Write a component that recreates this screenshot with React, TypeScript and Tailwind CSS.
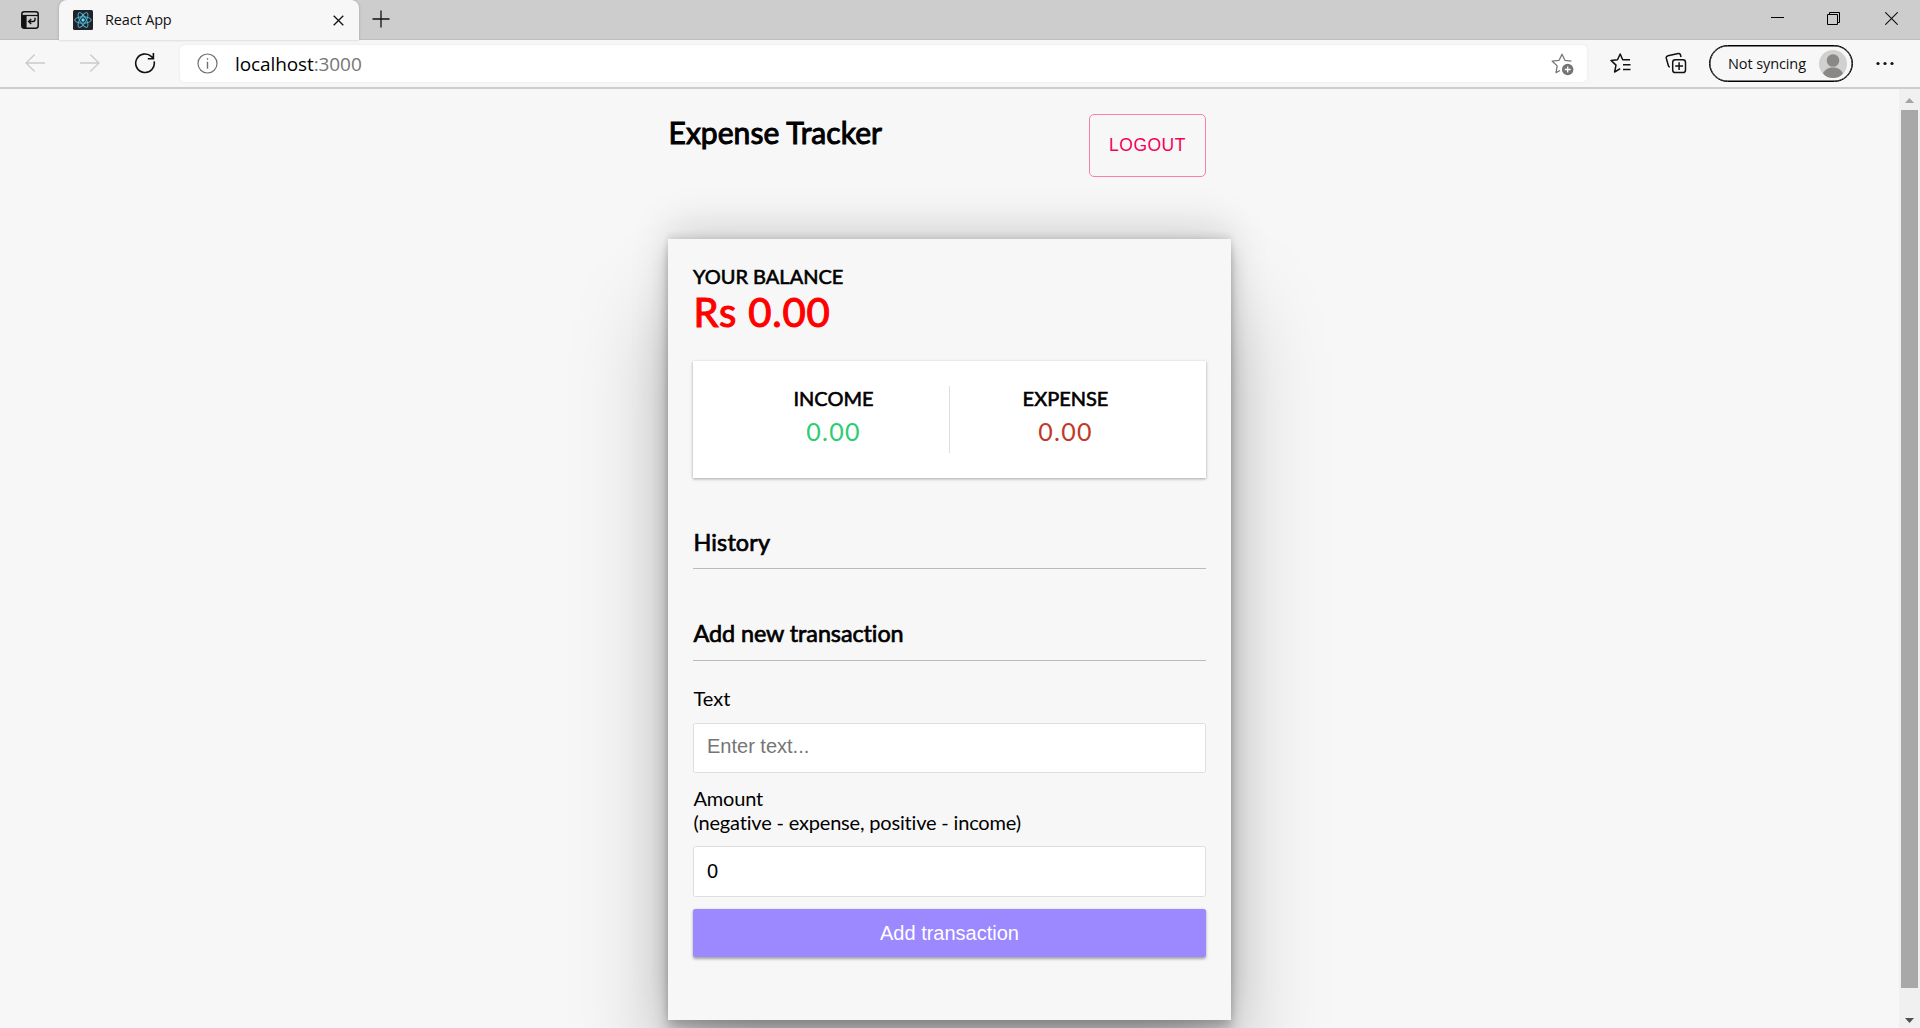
import React from "react";

const ui = "font-['Open_Sans','Noto_Sans',sans-serif]";

function ReactLogo() {
  return (
    <svg width="20" height="20" viewBox="0 0 20 20" fill="none">
      <rect width="20" height="20" rx="1.5" fill="#20232a" />
      <g stroke="#53c1de" strokeWidth="0.9">
        <ellipse cx="10" cy="10" rx="8.3" ry="3.2" />
        <ellipse cx="10" cy="10" rx="8.3" ry="3.2" transform="rotate(60 10 10)" />
        <ellipse cx="10" cy="10" rx="8.3" ry="3.2" transform="rotate(120 10 10)" />
      </g>
      <circle cx="10" cy="10" r="1.7" fill="#61dafb" />
    </svg>
  );
}

function TabStrip() {
  return (
    <div className="flex h-10 shrink-0 bg-[#cdcdcd] shadow-[inset_0_-1px_0_#bdbdbd]">
      <div className="flex w-[59px] shrink-0 pt-[11px] pl-[21px]">
        <svg width="18" height="18" viewBox="0 0 18 18" fill="none" stroke="#111">
          <rect x="0.8" y="0.8" width="16.4" height="16.4" rx="2.4" strokeWidth="1.5" />
          <path d="M1 4.500h16" strokeWidth="1.2" />
          <path d="M1 4h4.600v13H2.500L1 15.500z" fill="#111" stroke="none" />
          <path d="M14 6.700v1.800c0 1.300-.8 2-2 2H7.800M10.200 8l-2.600 2.500 2.600 2.500" strokeWidth="1.4" />
        </svg>
      </div>
      <div className="relative flex h-10 w-[300px] shrink-0 rounded-t-lg bg-[#f7f7f7] pt-2.5 pl-3.5 shadow-[0_0_3px_rgba(0,0,0,0.22)]">
        <ReactLogo />
        <span className={`${ui} ml-3 text-[14.5px] leading-5 tracking-[-0.15px] text-[#111]`}>React App</span>
        <svg className="mt-[5px] mr-[15px] ml-auto" width="11" height="11" viewBox="0 0 11 11" stroke="#111" strokeWidth="1.3">
          <path d="M.7.7l9.6 9.6M10.300.7L.7 10.300" />
        </svg>
      </div>
      <svg className="mt-2.5 ml-[13px]" width="18" height="18" viewBox="0 0 18 18" stroke="#111" strokeWidth="1.3">
        <path d="M9 .5v17M.5 9h17" />
      </svg>
      <div className="mr-[22px] ml-auto flex pt-3">
        <svg width="13" height="13" viewBox="0 0 13 13" stroke="#000" strokeWidth="1">
          <path d="M0 5.500h13" />
        </svg>
        <svg className="ml-[43px]" width="13" height="13" viewBox="0 0 13 13" fill="none" stroke="#000" strokeWidth="1">
          <path d="M.5 2.500h10v10h-10zM2.500 2.500v-2h10v10h-2" />
        </svg>
        <svg className="ml-[45px]" width="13" height="13" viewBox="0 0 13 13" stroke="#111" strokeWidth="1.1">
          <path d="M.3.3l12.400 12.400M12.700.3L.3 12.700" />
        </svg>
      </div>
    </div>
  );
}

const STAR = "M20.400 8.100l-6.500-.8L11 1.200 8.100 7.300 1.200 8.200l5 4.700-1.200 6.700 4-2.100";

function Toolbar() {
  return (
    <div className="flex h-[49px] shrink-0 border-b-2 border-[#cdcdcd] bg-[#f7f7f7]">
      <svg className="mt-3.5 ml-[25px]" width="20" height="18" viewBox="0 0 20 18" fill="none" stroke="#cacaca" strokeWidth="1.3">
        <path d="M9.700.5L1 9l8.700 8.500M1 9h19" />
      </svg>
      <svg className="mt-3.5 ml-[35px]" width="20" height="18" viewBox="0 0 20 18" fill="none" stroke="#cacaca" strokeWidth="1.3">
        <path d="M10.300.5L19 9l-8.700 8.500M19 9H0" />
      </svg>
      <svg className="mt-3 ml-[34px]" width="22" height="22" viewBox="0 0 22 22" fill="none" stroke="#111" strokeWidth="1.6">
        <path d="M20.100 9.300A9.300 9.300 0 1 1 17.500 4.600L19 6M19.400 1v5.700h-5.600" />
      </svg>
      <div className="mt-[5px] ml-[24px] flex h-[37px] w-[1407px] rounded-[5px] bg-white pl-[17px] shadow-[0_0_3px_rgba(0,0,0,0.07)]">
        <svg className="mt-2" width="21" height="21" viewBox="0 0 21 21" fill="none" stroke="#707070" strokeWidth="1.200">
          <circle cx="10.500" cy="10.500" r="9.500" />
          <path d="M10.500 8.700v7" strokeWidth="1.400" />
          <circle cx="10.500" cy="5.900" r=".5" fill="#707070" strokeWidth=".8" />
        </svg>
        <span className={`${ui} ml-[17px] text-[19px] leading-[39px] tracking-[-0.1px] text-black`}>
          localhost<span className="text-[#767676]">:3000</span>
        </span>
        <svg className="mt-2 mr-[13px] ml-auto" width="23" height="23" viewBox="0 0 23 23" fill="none">
          <path d={STAR} stroke="#777" strokeWidth="1.300" strokeLinejoin="round" />
          <circle cx="16.700" cy="16.500" r="5.700" fill="#737373" />
          <path d="M16.700 13.500v6M13.700 16.500h6" stroke="#fff" strokeWidth="1.300" />
        </svg>
      </div>
      <svg className="mt-3 ml-[23px]" width="22" height="22" viewBox="0 0 22 22" fill="none" stroke="#111" strokeWidth="1.500" strokeLinejoin="round">
        <path d="M20 7.800h-7.300L10.200 2 7.500 7.800 1 8.400l5 4.700-1.400 6.900 5.600-3.400M13 12.700h7.500M13 17.500h7.500" />
      </svg>
      <svg className="mt-3 ml-[33px]" width="22" height="22" viewBox="0 0 22 22" fill="none" stroke="#111" strokeWidth="1.500">
        <rect x="7.700" y="7.700" width="12.800" height="12.800" rx="2.600" />
        <path d="M14.100 10.200v7.800M10.200 14.100H18M16 5l-.5-2c-.3-1.200-1.200-1.700-2.300-1.400L3 3.800C1.800 4.100 1 5 1.300 6.200l2 7.300c.2.800.7 1.300 1.500 1.600" />
      </svg>
      <div className="mt-[5px] ml-[22px] flex h-[37px] w-36 shrink-0 items-center rounded-full border border-black bg-[#f7f7f7] pl-[18px] shadow-[inset_0_0_0_0.500px_black]">
        <span className={`${ui} text-[14.5px] tracking-[-0.1px] whitespace-nowrap text-[#111]`}>Not syncing</span>
        <svg className="mr-[5px] ml-auto" width="28" height="28" viewBox="0 0 28 28">
          <circle cx="14" cy="14" r="14" fill="#d2d0ce" />
          <circle cx="14" cy="10.500" r="6.300" fill="#8a8886" />
          <path d="M4 23.500c2-4.400 6-6 10-6s8 1.600 10 6c-2.500 3-6 4.500-10 4.500s-7.500-1.500-10-4.500z" fill="#8a8886" />
        </svg>
      </div>
      <svg className="mt-[21px] ml-[23px]" width="18" height="5" viewBox="0 0 18 5" fill="#111">
        <circle cx="2" cy="2.500" r="1.600" />
        <circle cx="9" cy="2.500" r="1.600" />
        <circle cx="16" cy="2.500" r="1.600" />
      </svg>
    </div>
  );
}

function Scrollbar() {
  return (
    <div className="flex w-[21px] shrink-0 flex-col items-center bg-[#f0f0f0]">
      <svg className="mt-[9px] shrink-0" width="9" height="5" viewBox="0 0 9 5" fill="#a3a3a3">
        <path d="M0 5L4.500 0 9 5z" />
      </svg>
      <div className="mt-[7px] h-[878px] w-[17px] shrink-0 bg-[#a8a8a8]" />
      <svg className="mt-[30px] shrink-0" width="9" height="5" viewBox="0 0 9 5" fill="#505050">
        <path d="M0 0L4.500 5 9 0z" />
      </svg>
    </div>
  );
}

function SectionTitle({ children }: { children: React.ReactNode }) {
  return (
    <h3 className="pl-[0.500px] text-[23.400px] leading-[28px] [-webkit-text-stroke:0.700px_black]">
      {children}
    </h3>
  );
}

function Tracker() {
  return (
    <div className="flex w-[563px] flex-col font-['Lato',sans-serif] text-[20px] leading-6 text-black [font-variant-ligatures:none]">
      <header className="flex justify-between pt-[25px] pr-[25px]">
        <h2 className="pl-[0.500px] text-[30px] leading-9 tracking-[0.050px] [-webkit-text-stroke:1px_black]">Expense Tracker</h2>
        <button className="h-[63px] w-[117px] rounded-[5px] border border-[#f77fa8] pb-0.5 font-['Liberation_Sans',sans-serif] text-[17.500px] tracking-[0.500px] text-[#f50057]">
          LOGOUT
        </button>
      </header>
      <main className="mt-[62px] h-[781px] shrink-0 bg-[#f7f7f7] p-[25px] shadow-[0_67.500px_87.500px_rgba(0,0,0,0.25),0_-15px_37.500px_rgba(0,0,0,0.12),0_5px_7.500px_rgba(0,0,0,0.12),0_15px_16.250px_rgba(0,0,0,0.17),0_-3.750px_6.250px_rgba(0,0,0,0.09)]">
        <h4 className="[-webkit-text-stroke:0.600px_black]">YOUR BALANCE</h4>
        <h1 className="pl-[0.500px] text-[40px] leading-[48px] tracking-[0.800px] text-[#f00] [-webkit-text-stroke:1.100px_#f00]">Rs 0.00</h1>
        <div className="mt-[25px] flex h-[117px] bg-white p-[25px] text-center shadow-[0_1.250px_3.750px_rgba(0,0,0,0.12),0_1.250px_2.500px_rgba(0,0,0,0.24)]">
          <div className="flex-1 border-r border-[#dedede]">
            <h4 className="[-webkit-text-stroke:0.600px_black]">INCOME</h4>
            <p className="mt-[6px] text-[25px] leading-[30px] tracking-[1.250px] text-[#2ecc71]">0.00</p>
          </div>
          <div className="flex-1">
            <h4 className="[-webkit-text-stroke:0.600px_black]">EXPENSE</h4>
            <p className="mt-[6px] text-[25px] leading-[30px] tracking-[1.250px] text-[#c0392b]">0.00</p>
          </div>
        </div>
        <section className="mt-[50px] border-b border-[#bbb] pb-3 tracking-[0.150px]">
          <SectionTitle>History</SectionTitle>
        </section>
        <section className="mt-[50px] border-b border-[#bbb] pb-[13px] tracking-[-0.080px]">
          <SectionTitle>Add new transaction</SectionTitle>
        </section>
        <form className="mt-[25px]">
          <label className="block pl-[0.500px]">Text</label>
          <input
            className="mt-[13px] block h-[50px] w-full rounded-[2.500px] border border-[#dedede] bg-white px-[13px] pb-[3px] font-['Liberation_Sans',sans-serif] placeholder:text-[#757575]"
            placeholder="Enter text..."
          />
          <label className="mt-[13px] block pl-[0.500px] tracking-[-0.180px]">
            Amount
            <br />
            (negative - expense, positive - income)
          </label>
          <input
            className="mt-3 block h-[51px] w-full rounded-[2.500px] border border-[#dedede] bg-white px-[13px] pb-px font-['Liberation_Sans',sans-serif]"
            defaultValue="0"
          />
          <button
            type="button"
            className="mt-3 block h-12 w-full rounded-[2.500px] bg-[#9c88ff] font-['Liberation_Sans',sans-serif] text-white shadow-[0_1.250px_3.750px_rgba(0,0,0,0.12),0_1.250px_2.500px_rgba(0,0,0,0.24)]"
          >
            Add transaction
          </button>
        </form>
      </main>
    </div>
  );
}

export default function App() {
  return (
    <div className="flex h-[1028px] w-[1920px] flex-col overflow-hidden bg-[#f7f7f7]">
      <TabStrip />
      <Toolbar />
      <div className="flex min-h-0 flex-1 overflow-hidden">
        <div className="flex flex-1 justify-center overflow-hidden">
          <Tracker />
        </div>
        <Scrollbar />
      </div>
    </div>
  );
}
